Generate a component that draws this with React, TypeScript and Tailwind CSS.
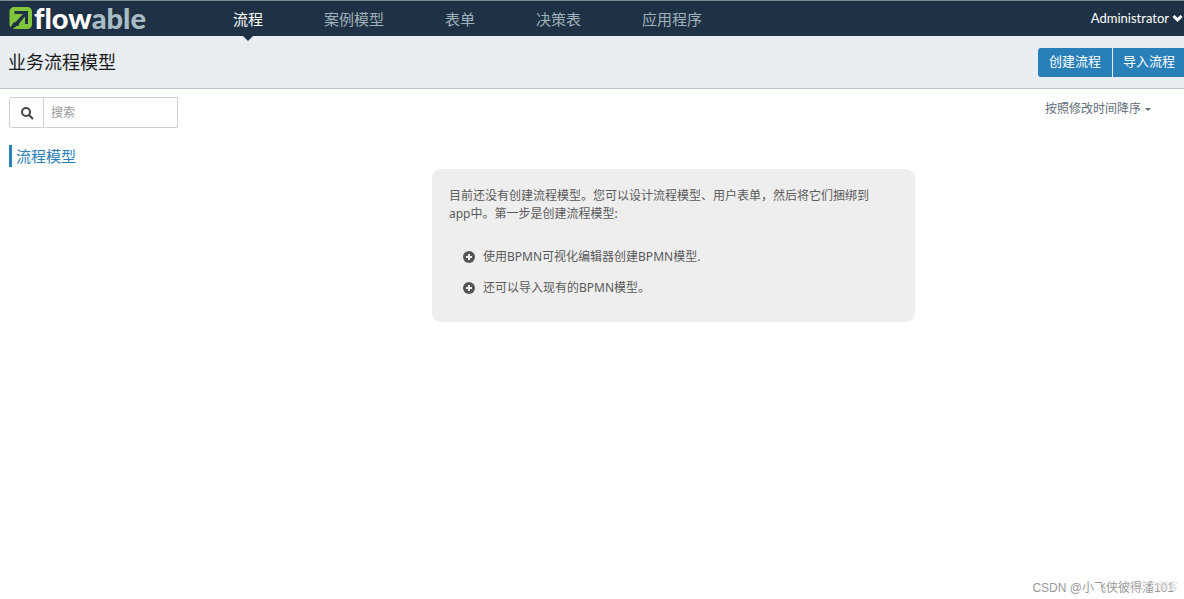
import { useState } from 'react'

const NAV_ITEMS = ['流程', '案例模型', '表单', '决策表', '应用程序']

function Logo() {
  return (
    <a href="#" aria-label="flowable" className="flex w-[194px] shrink-0 items-center gap-px leading-none">
      <svg viewBox="0 0 24 24" className="h-6 w-6" aria-hidden="true">
        <path
          d="M5 0h13.500a4.500 4.500 0 0 1 4.500 4.500v13a4.500 4.500 0 0 1-4.500 4.500H5a4.500 4.500 0 0 1-4.500-4.500v-13A4.500 4.500 0 0 1 5 0Z"
          fill="#81c63a"
        />
        <path d="M5.500 4H19v13h-3V9.500L10.500 16l-1 3H7.500L2.500 23H0l4.500-7.500 2-.500L14 7H5.500Z" fill="#1f3245" />
      </svg>
      <span className="pb-0.5 font-['Lato',sans-serif] text-[29px] leading-[34px] font-black text-white [font-variant-ligatures:none]">
        flow<span className="text-[#a9bcc4]">able</span>
      </span>
    </a>
  )
}

function PlusCircle() {
  return (
    <svg viewBox="0 0 12 12" className="h-3 w-3 shrink-0" aria-hidden="true">
      <circle cx="6" cy="6" r="6" fill="#555" />
      <path d="M5 3h2v2h2v2H7v2H5V7H3V5h2Z" fill="#eee" />
    </svg>
  )
}

function Header() {
  const [active, setActive] = useState(0)

  return (
    <header className="flex h-9 items-center border-t border-[#7c8790] bg-[#1f3245] pl-[9px]">
      <Logo />
      <nav className="flex h-full gap-px">
        {NAV_ITEMS.map((item, i) => (
          <button
            key={item}
            onClick={() => setActive(i)}
            className={`relative h-full px-[30px] pt-px text-[15px] ${i === active ? 'text-white' : 'text-[#9fb1ba]'}`}
          >
            {item}
            {i === active && (
              <span className="absolute top-full left-1/2 h-0 w-0 -translate-x-1/2 border-x-[5px] border-t-[5px] border-x-transparent border-t-[#1f3245]" />
            )}
          </button>
        ))}
      </nav>
      <button className="ml-auto flex items-center gap-[3px] pr-px text-[13px] text-white">
        <span className="font-['Lato',sans-serif]">Administrator</span>
        <svg viewBox="0 0 11 8" className="h-2 w-[11px]" aria-hidden="true">
          <path d="m1.500 1 4 4 4-4" fill="none" stroke="currentColor" strokeWidth="3" />
        </svg>
      </button>
    </header>
  )
}

export default function App() {
  return (
    <div className="flex min-h-screen flex-col bg-white font-['Noto_Sans','Noto_Sans_CJK_SC',sans-serif] text-[#5a5a5a]">
      <Header />

      <div className="flex h-[53px] items-center justify-between border-b border-[#b8c4d0] bg-[#e8edf1] pl-2">
        <h1 className="text-lg text-[#1a1a1a]">业务流程模型</h1>
        <div className="flex gap-px text-[13px] text-white">
          <button className="h-[29px] rounded-l-[3px] bg-[#2980b9] px-[11px]">创建流程</button>
          <button className="h-[29px] bg-[#2980b9] pr-[9px] pl-[10px]">导入流程</button>
        </div>
      </div>

      <div className="flex items-start justify-between pt-2 pr-[33px] pl-[9px]">
        <div className="w-[169px]">
          <label className="flex h-[31px] rounded-l-[3px] border border-[#d0d0d0]">
            <span className="flex w-[34px] shrink-0 items-center justify-center border-r border-[#d0d0d0]">
              <svg viewBox="0 0 14 14" className="h-[14px] w-[14px]" aria-label="搜索">
                <circle cx="6" cy="6" r="4" fill="none" stroke="#444" strokeWidth="2" />
                <path d="m9 9 4 4" stroke="#444" strokeWidth="2" />
              </svg>
            </span>
            <input
              type="text"
              placeholder="搜索"
              className="w-full min-w-0 px-[7px] text-xs outline-none placeholder:text-[#999]"
            />
          </label>
          <h2 className="mt-[17px] border-l-[3px] border-[#2980b9] pl-1 text-[15px] leading-[22px] text-[#2980b9]">
            流程模型
          </h2>
        </div>
        <button className="mt-1 flex items-center gap-1 text-xs text-[#5f6d7b]">
          按照修改时间降序
          <span className="border-x-[3px] border-t-[3px] border-x-transparent border-t-[#5f6d7b]" />
        </button>
      </div>

      <main className="mt-0.5 ml-[432px] max-w-[483px] rounded-[9px] bg-[#eee] px-[17px] pt-[18px] pb-[25px] text-xs">
        <p className="pr-4 leading-[18px]">
          目前还没有创建流程模型。您可以设计流程模型、用户表单，然后将它们捆绑到app中。第一步是创建流程模型:
        </p>
        <ul className="mt-[25px] flex flex-col gap-[13px] pl-[14px] leading-[18px]">
          <li className="flex items-center gap-2">
            <PlusCircle />
            使用BPMN可视化编辑器创建BPMN模型.
          </li>
          <li className="flex items-center gap-2">
            <PlusCircle />
            还可以导入现有的BPMN模型。
          </li>
        </ul>
      </main>

      <footer className="relative mt-auto self-end pr-[10px] pb-[3px] font-['Liberation_Sans','Noto_Sans_CJK_SC',sans-serif] text-xs text-[#999]">
        CSDN @小飞侠彼得潘101
        <span className="absolute right-[6px] text-[10px] text-[#ddd]">51CTO博客</span>
      </footer>
    </div>
  )
}
